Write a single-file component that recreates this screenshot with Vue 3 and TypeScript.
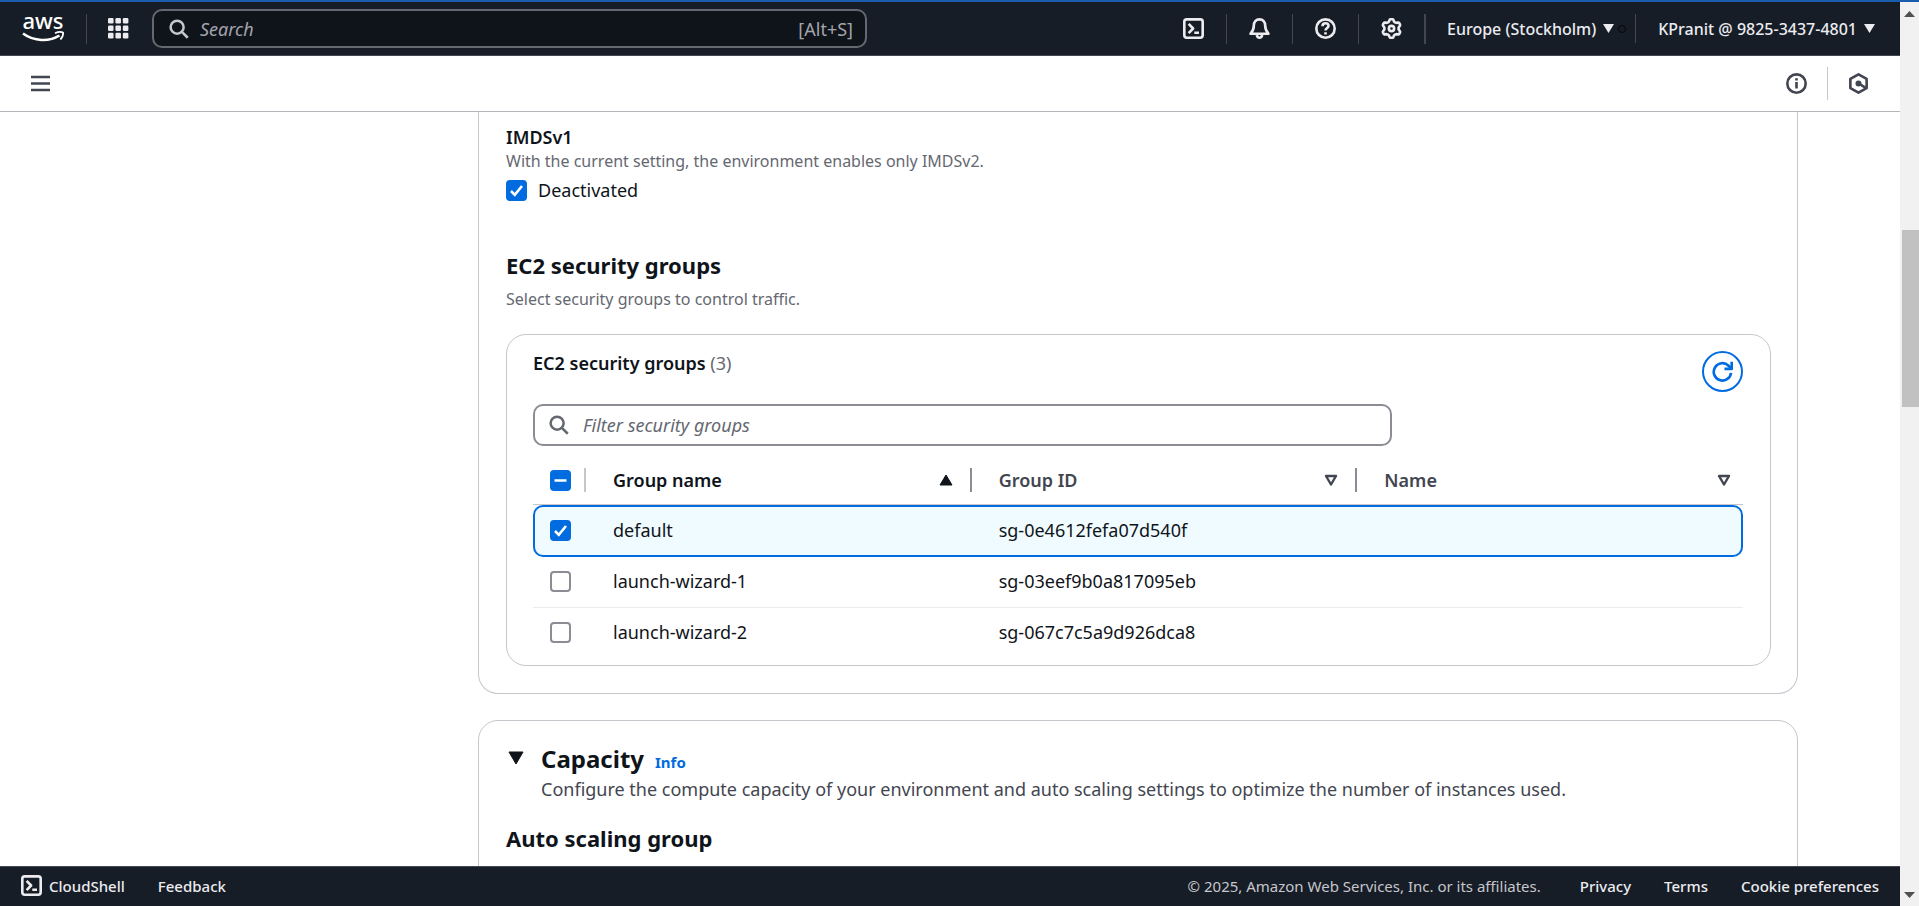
<script setup lang="ts">
import { computed, ref } from 'vue'

interface SecurityGroup {
  name: string
  id: string
  label: string
  selected: boolean
}

const deactivated = ref(true)
const filter = ref('')
const query = ref('')
const groups = ref<SecurityGroup[]>([
  { name: 'default', id: 'sg-0e4612fefa07d540f', label: '', selected: true },
  { name: 'launch-wizard-1', id: 'sg-03eef9b0a817095eb', label: '', selected: false },
  { name: 'launch-wizard-2', id: 'sg-067c7c5a9d926dca8', label: '', selected: false },
])

const visible = computed(() => groups.value.filter((g) => g.name.includes(filter.value)))
const allSelected = computed(() => groups.value.every((g) => g.selected))
const someSelected = computed(() => groups.value.some((g) => g.selected) && !allSelected.value)

function toggleAll() {
  const next = !allSelected.value
  groups.value.forEach((g) => (g.selected = next))
}

// Six rounded teeth around the centre of a 16 unit box.
const gear = (() => {
  const points: string[] = []
  for (let d = 0; d < 360; d += 5) {
    const a = ((d - 90) * Math.PI) / 180
    const r = 6.3 + 0.9 * Math.tanh(2 * Math.cos((6 * d * Math.PI) / 180))
    points.push(`${(8 + r * Math.cos(a)).toFixed(2)} ${(8 + r * Math.sin(a)).toFixed(2)}`)
  }
  return `M${points.join('L')}Z`
})()

const squares = [0, 6, 12].flatMap((y) => [0, 6, 12].map((x) => ({ x, y })))
</script>

<template>
  <div class="window">
    <div class="page">
      <header class="topbar">
        <a class="logo" href="#" aria-label="AWS home">
          <svg width="42" height="48" viewBox="0 -10 42 48">
            <text x="21" y="14" text-anchor="middle" class="logo-text">aws</text>
            <path d="M1 18.500C12 26.500 27 27 37.500 20.500" fill="none" stroke="#fff" stroke-width="2.600" />
            <path d="M33 18.300c3-1.500 6-1.700 8-.8.4 2.500-.5 5-2.600 7" fill="none" stroke="#fff" stroke-width="1.800" />
          </svg>
        </a>
        <button class="icon-button apps" type="button" aria-label="Services">
          <svg width="21" height="21" viewBox="0 0 17 17">
            <rect v-for="s in squares" :key="`${s.x}-${s.y}`" :x="s.x" :y="s.y" width="4.500" height="4.500" rx="1" fill="#ebebf0" />
          </svg>
        </button>
        <label class="search">
          <svg width="20" height="20" viewBox="0 0 16 16" fill="none" stroke="currentColor" stroke-width="2">
            <circle cx="6.500" cy="6.500" r="5.200" /><path d="m10.300 10.300 4.700 4.700" />
          </svg>
          <input v-model="query" type="text" placeholder="Search" aria-label="Search" />
          <span class="shortcut">[Alt+S]</span>
        </label>
        <nav class="tools">
          <button class="icon-button" type="button" aria-label="CloudShell">
            <svg class="icon" viewBox="0 0 16 16">
              <rect x="1" y="1" width="14" height="14" rx="1.800" /><path d="m4.300 4.500 3.400 3.500-3.400 3.500M8.600 11.200h3.600" />
            </svg>
          </button>
          <button class="icon-button" type="button" aria-label="Notifications">
            <svg class="icon" viewBox="0 0 16 16">
              <path d="M8 1C5.300 1 3.700 3 3.700 5.600c0 3.400-.9 4.800-2.500 6.400h13.600c-1.600-1.600-2.500-3-2.500-6.400C12.300 3 10.700 1 8 1Z" /><path d="M6 13c.2 1.300 1 2 2 2s1.800-.7 2-2" />
            </svg>
          </button>
          <button class="icon-button" type="button" aria-label="Help">
            <svg class="icon" viewBox="0 0 16 16">
              <circle cx="8" cy="8" r="7" /><path d="M5.700 6.200C5.700 4.900 6.700 4 8 4s2.300.8 2.300 2c0 1.600-2.300 1.700-2.300 3.600M8 10.800v1.700" />
            </svg>
          </button>
          <button class="icon-button settings" type="button" aria-label="Settings">
            <svg class="icon" viewBox="0 0 16 16"><path :d="gear" /><circle cx="8" cy="8" r="2" /></svg>
          </button>
          <button class="menu region" type="button">
            Europe (Stockholm)
            <svg width="11" height="9" viewBox="0 0 11 9"><path d="M0 0h11L5.500 9Z" fill="currentColor" /></svg>
            <span class="dot"></span>
          </button>
          <button class="menu account" type="button">
            KPranit @ 9825-3437-4801
            <svg width="11" height="9" viewBox="0 0 11 9"><path d="M0 0h11L5.500 9Z" fill="currentColor" /></svg>
          </button>
        </nav>
      </header>

      <div class="subbar">
        <button class="plain" type="button" aria-label="Open navigation">
          <svg width="19" height="17" viewBox="0 0 19 17"><path d="M0 2h19M0 8.500h19M0 15h19" stroke="currentColor" stroke-width="2.500" /></svg>
        </button>
        <div class="subbar-right">
          <button class="plain info-button" type="button" aria-label="Open help panel">
            <svg class="icon" viewBox="0 0 16 16"><circle cx="8" cy="8" r="7" /><path d="M8 4v1.700M8 6.800v5" /></svg>
          </button>
          <button class="plain" type="button" aria-label="Assistant">
            <svg class="icon" viewBox="0 0 16 16"><path d="m8 1 6.200 3.500v7L8 15l-6.200-3.500v-7Z" /><circle cx="8" cy="8" r="1.300" fill="currentColor" /><path d="m8.500 8.200 5 3.200" /></svg>
          </button>
        </div>
      </div>

      <main class="content">
        <section class="card first">
          <h3 class="label">IMDSv1</h3>
          <p class="hint">With the current setting, the environment enables only IMDSv2.</p>
          <label class="option"><input v-model="deactivated" type="checkbox" class="box" />Deactivated</label>

          <h2 class="title groups-title">EC2 security groups</h2>
          <p class="hint groups-hint">Select security groups to control traffic.</p>

          <div class="card inner">
            <div class="inner-head">
              <h3 class="label">EC2 security groups <span class="count">(3)</span></h3>
              <button class="refresh" type="button" aria-label="Refresh">
                <svg class="icon" viewBox="0 0 16 16"><path d="M14.500 9A6.600 6.600 0 1 1 12.600 3.600L14.500 5.500" /><path d="M15 .5V6H9.500" /></svg>
              </button>
            </div>
            <label class="filter">
              <svg width="20" height="20" viewBox="0 0 16 16" fill="none" stroke="currentColor" stroke-width="2">
                <circle cx="6.500" cy="6.500" r="5.200" /><path d="m10.300 10.300 4.700 4.700" />
              </svg>
              <input v-model="filter" type="text" placeholder="Filter security groups" aria-label="Filter security groups" />
            </label>
            <table class="table">
              <thead>
                <tr>
                  <th class="pick"><div class="cell"><input type="checkbox" class="box" aria-label="Select all" :checked="allSelected" :indeterminate="someSelected" @change="toggleAll" /></div></th>
                  <th><div class="cell head">Group name<svg width="14" height="12" viewBox="0 0 14 12"><path d="M7 1 13 11H1Z" fill="currentColor" stroke="currentColor" stroke-linejoin="round" /></svg></div></th>
                  <th class="idle"><div class="cell head">Group ID<svg width="14" height="12" viewBox="0 0 14 12"><path d="M2 2h10L7 10.500Z" fill="none" stroke="currentColor" stroke-width="2.400" stroke-linejoin="round" /></svg></div></th>
                  <th class="idle"><div class="cell head">Name<svg width="14" height="12" viewBox="0 0 14 12"><path d="M2 2h10L7 10.500Z" fill="none" stroke="currentColor" stroke-width="2.400" stroke-linejoin="round" /></svg></div></th>
                </tr>
              </thead>
              <tbody>
                <tr v-for="g in visible" :key="g.id" :class="{ selected: g.selected }">
                  <td class="pick"><div class="cell"><input v-model="g.selected" type="checkbox" class="box" :aria-label="`Select ${g.name}`" /></div></td>
                  <td>{{ g.name }}</td>
                  <td>{{ g.id }}</td>
                  <td>{{ g.label }}</td>
                </tr>
              </tbody>
            </table>
          </div>
        </section>

        <section class="card capacity">
          <div class="capacity-head">
            <button class="plain toggle" type="button" aria-label="Collapse Capacity">
              <svg width="18" height="14" viewBox="0 0 18 14"><path d="M2 1h14L9 13Z" fill="currentColor" stroke="currentColor" stroke-linejoin="round" /></svg>
            </button>
            <div>
              <div class="capacity-title"><h2>Capacity</h2><a href="#">Info</a></div>
              <p>Configure the compute capacity of your environment and auto scaling settings to optimize the number of instances used.</p>
            </div>
          </div>
          <h2 class="title">Auto scaling group</h2>
        </section>
      </main>

      <footer class="footer">
        <a class="shell" href="#">
          <svg class="icon" viewBox="0 0 16 16"><rect x="1" y="1" width="14" height="14" rx="1.800" /><path d="m4.300 4.500 3.400 3.500-3.400 3.500M8.600 11.200h3.600" /></svg>
          CloudShell
        </a>
        <a href="#">Feedback</a>
        <span class="copyright">© 2025, Amazon Web Services, Inc. or its affiliates.</span>
        <a href="#">Privacy</a>
        <a href="#">Terms</a>
        <a href="#">Cookie preferences</a>
      </footer>
    </div>

    <div class="scrollbar" aria-hidden="true">
      <svg width="11" height="6" viewBox="0 0 11 6"><path d="M0 6 5.500 0 11 6Z" fill="#505050" /></svg>
      <div class="track"><div class="thumb"></div></div>
      <svg width="11" height="6" viewBox="0 0 11 6"><path d="M0 0h11L5.500 6Z" fill="#505050" /></svg>
    </div>
  </div>
</template>

<style>
body {
  margin: 0;
  overflow: hidden;
}
</style>

<style scoped>
* {
  box-sizing: border-box;
}
.window {
  display: flex;
  height: 100vh;
  border-top: 2px solid #1b5cad;
  background: #fff;
  color: #0f141a;
  font: 18px/24px "Noto Sans", "Open Sans", sans-serif;
}
.page {
  flex: 1;
  min-width: 0;
  display: flex;
  flex-direction: column;
}
h2, h3, p {
  margin: 0;
}
button, input {
  font: inherit;
  color: inherit;
}
button {
  padding: 0;
  border: 0;
  background: none;
}
svg {
  display: block;
  flex: none;
}
.icon {
  width: 21px;
  height: 21px;
  fill: none;
  stroke: currentColor;
  stroke-width: 2;
  stroke-linejoin: round;
}

.topbar {
  flex: none;
  display: flex;
  align-items: center;
  height: 54px;
  background: #161d26;
  border-bottom: 1px solid #424650;
  color: #ebebf0;
}
.logo {
  display: flex;
  align-items: center;
  height: 30px;
  padding: 0 22px;
  border-right: 1px solid #424650;
}
.logo-text {
  font: 500 22px "Noto Sans", sans-serif;
  fill: #fff;
}
.apps {
  margin: 0 23px 0 21px;
}
.search {
  flex: 0 1 715px;
  display: flex;
  align-items: center;
  gap: 11px;
  height: 39px;
  padding: 0 12px 0 15px;
  border: 2px solid #656871;
  border-radius: 10px;
  background: #0f141a;
  color: #c6c6cd;
}
.search input, .filter input {
  flex: 1;
  min-width: 0;
  padding: 0;
  border: 0;
  outline: 0;
  background: none;
}
.search input::placeholder {
  color: #a4a4ad;
  font-style: italic;
  opacity: 1;
}
.shortcut {
  color: #a4a4ad;
}
.tools {
  display: flex;
  align-items: center;
  margin-left: auto;
}
.tools .icon-button {
  display: flex;
  align-items: center;
  height: 30px;
  padding: 0 22px;
  border-right: 1px solid #424650;
}
.tools .settings {
  border-right-width: 2px;
}
.menu {
  display: flex;
  align-items: center;
  gap: 7px;
  height: 29px;
  font-size: 16px;
  font-weight: 500;
  white-space: nowrap;
}
.region {
  padding: 0 9px 0 21px;
  border-right: 1px solid #424650;
}
.account {
  padding: 0 25px 0 22px;
}
.dot {
  width: 8px;
  height: 8px;
  margin-left: -3px;
  border: 1px solid #05080c;
  border-radius: 50%;
}

.subbar {
  flex: none;
  display: flex;
  align-items: center;
  justify-content: space-between;
  height: 56px;
  padding: 0 31px;
  border-bottom: 1px solid #b4b4bb;
  color: #424650;
}
.subbar-right {
  display: flex;
  align-items: center;
}
.info-button {
  display: flex;
  align-items: center;
  height: 33px;
  margin-right: 20px;
  padding-right: 20px;
  border-right: 1px solid #c6c6cd;
}

.content {
  flex: 1;
  min-height: 0;
  overflow: hidden;
  margin-left: 376px;
  padding: 0 102px;
}
.card {
  border: 1px solid #c6c6cd;
  border-radius: 20px;
}
.first {
  padding: 13px 26px 27px 27px;
  border-top: 0;
  border-radius: 0 0 20px 20px;
}
.label {
  font-size: 18px;
  font-weight: 600;
}
.hint {
  color: #656871;
  font-size: 16px;
}
.option {
  display: flex;
  align-items: center;
  gap: 11px;
  height: 34px;
}
.title {
  font-size: 22px;
  line-height: 28px;
  font-weight: 700;
}
.groups-title {
  margin-top: 44px;
}
.groups-hint {
  margin-top: 8px;
}
.inner {
  margin-top: 23px;
  padding: 16px 27px 6px 26px;
}
.inner-head {
  display: flex;
  justify-content: space-between;
}
.count {
  color: #656871;
  font-weight: 400;
}
.refresh {
  display: grid;
  place-items: center;
  width: 41px;
  height: 41px;
  border: 2px solid #006ce0;
  border-radius: 50%;
  color: #006ce0;
}
.filter {
  display: flex;
  align-items: center;
  gap: 14px;
  width: 71%;
  height: 42px;
  margin: 12px 0 7px;
  padding: 0 14px;
  border: 2px solid #8c8c94;
  border-radius: 10px;
  color: #656871;
}
.filter input::placeholder {
  color: #656871;
  font-style: italic;
  opacity: 1;
}
.box {
  appearance: none;
  display: block;
  flex: none;
  width: 21px;
  height: 21px;
  margin: 0;
  border: 2px solid #8c8c94;
  border-radius: 4px;
  background: #fff;
}
.box:checked, .box:indeterminate {
  border-color: #006ce0;
  background: #006ce0 center / 17px 17px no-repeat;
}
.box:checked {
  background-image: url("data:image/svg+xml,%3Csvg xmlns='http://www.w3.org/2000/svg' viewBox='0 0 17 17'%3E%3Cpath d='M3 9l3.800 3.800L14 4' fill='none' stroke='white' stroke-width='2.600'/%3E%3C/svg%3E");
}
.box:indeterminate {
  background-image: url("data:image/svg+xml,%3Csvg xmlns='http://www.w3.org/2000/svg' viewBox='0 0 17 17'%3E%3Cpath d='M2.500 8.500h12' stroke='white' stroke-width='2.600'/%3E%3C/svg%3E");
}
.table {
  width: 100%;
  table-layout: fixed;
  border-collapse: separate;
  border-spacing: 0;
  text-align: left;
}
th {
  height: 52px;
  padding: 3px 0 0;
  border-bottom: 1px solid #c6c6cd;
  font-weight: 600;
}
.pick {
  width: 53px;
}
.cell {
  display: flex;
  align-items: center;
  height: 24px;
}
.pick .cell {
  padding-left: 17px;
}
th.pick .cell {
  border-right: 2px solid #c6c6cd;
}
.head {
  justify-content: space-between;
  padding: 0 17px 0 27px;
  border-right: 2px solid #8c8c94;
}
th:last-child .head {
  padding-right: 12px;
  border-right: 0;
}
.idle {
  color: #424650;
}
td {
  height: 51px;
  padding: 0 0 2px 27px;
  border-bottom: 1px solid #ebebf0;
}
td.pick {
  padding: 0 0 2px;
}
tbody tr:last-child td {
  border-bottom-color: transparent;
}
.selected td {
  height: 52px;
  border-top: 2px solid #006ce0;
  border-bottom: 2px solid #006ce0;
  background: #f0fbff;
}
.selected td:first-child {
  border-left: 2px solid #006ce0;
  border-radius: 10px 0 0 10px;
}
.selected td:first-child .cell {
  padding-left: 15px;
}
.selected td:last-child {
  border-right: 2px solid #006ce0;
  border-radius: 0 10px 10px 0;
}

.capacity {
  margin-top: 26px;
  padding: 22px 27px 80px;
}
.capacity-head {
  display: flex;
  gap: 16px;
  margin-bottom: 23px;
}
.toggle {
  align-self: flex-start;
  padding: 8px 0 0 1px;
}
.capacity-title {
  display: flex;
  align-items: baseline;
  gap: 11px;
}
.capacity-title h2 {
  font-size: 24px;
  line-height: 32px;
}
.capacity-title a {
  color: #006ce0;
  font-size: 15px;
  font-weight: 700;
  text-decoration: none;
}
.capacity p {
  margin-top: 2px;
  color: #424650;
}

.footer {
  flex: none;
  display: flex;
  align-items: center;
  gap: 33px;
  height: 40px;
  padding: 0 21px 2px;
  border-top: 1px solid #424650;
  background: #161d26;
  color: #ebebf0;
  font-size: 15px;
  white-space: nowrap;
}
.footer a {
  color: inherit;
  font-weight: 500;
  text-decoration: none;
}
.shell {
  display: flex;
  align-items: center;
  gap: 7px;
}
.footer .copyright {
  margin-left: auto;
  margin-right: 6px;
  color: #c6c6cd;
}

.scrollbar {
  flex: none;
  display: flex;
  flex-direction: column;
  align-items: center;
  width: 19px;
  padding: 9px 0 8px;
  background: #f1f1f1;
}
.track {
  align-self: stretch;
  flex: 1;
  padding: 213px 0 0 2px;
}
.thumb {
  height: 177px;
  background: #c1c1c1;
}
</style>
